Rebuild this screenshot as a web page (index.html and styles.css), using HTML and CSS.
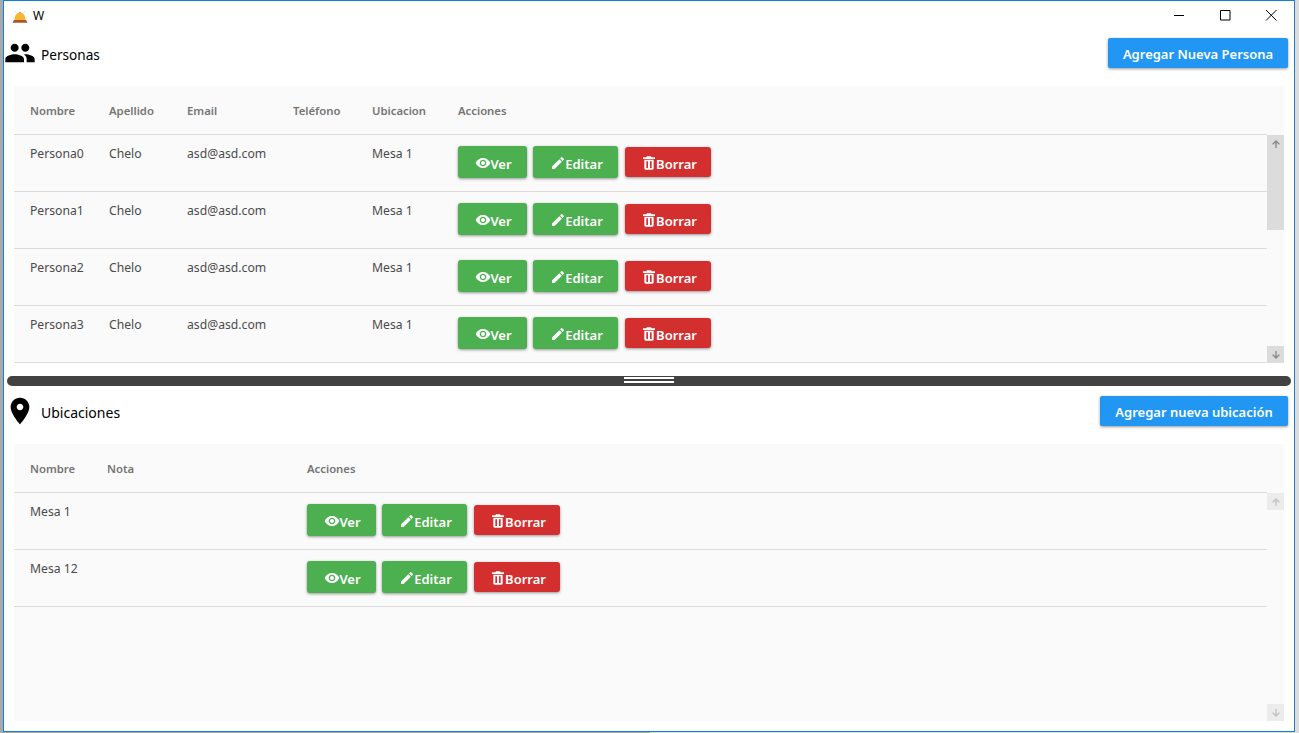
FILE: index.html
```html
<!DOCTYPE html>
<html lang="es">
<head>
<meta charset="utf-8">
<title>W</title>
<link rel="stylesheet" href="styles.css">
</head>
<body>
<svg class="defs" width="0" height="0" aria-hidden="true">
  <symbol id="i-eye" viewBox="0 0 24 24"><path d="M12 4.5C7 4.5 2.73 7.61 1 12c1.73 4.39 6 7.5 11 7.5s9.27-3.11 11-7.5c-1.73-4.39-6-7.5-11-7.5zM12 17c-2.76 0-5-2.24-5-5s2.24-5 5-5 5 2.24 5 5-2.24 5-5 5zm0-8c-1.66 0-3 1.34-3 3s1.34 3 3 3 3-1.34 3-3-1.34-3-3-3z"/></symbol>
  <symbol id="i-edit" viewBox="0 0 24 24"><path d="M3 17.25V21h3.75L17.81 9.94l-3.75-3.75L3 17.25zM20.71 7.04c.39-.39.39-1.02 0-1.41l-2.34-2.34c-.39-.39-1.02-.39-1.41 0l-1.83 1.83 3.75 3.75 1.83-1.83z"/></symbol>
  <symbol id="i-del" viewBox="0 0 24 24"><path fill-rule="evenodd" d="M5 7h14v13c0 1.100-.9 2-2 2H7c-1.100 0-2-.9-2-2V7zm3 2.500V19.500h2.500V9.500H8zm5.500 0V19.500H16V9.500h-2.500zM3 3.500h5l1-1.500h6l1 1.500h5V6H3V3.500z"/></symbol>
  <symbol id="i-up" viewBox="0 0 10 10"><path d="M5 1 9 5 7.800 5.800 5.700 3.800V9H4.300V3.800L2.200 5.800 1 5z"/></symbol>
  <symbol id="i-down" viewBox="0 0 10 10"><path d="M5 9 9 5 7.800 4.200 5.700 6.200V1H4.300V6.200L2.200 4.200 1 5z"/></symbol>
</svg>
<div class="window">
  <header class="titlebar">
    <svg class="app-icon" viewBox="0 0 16 16" aria-hidden="true">
      <path d="M2.500 12C2.500 7 5 4.800 8 4.800s5.500 2.200 5.500 7.200z" fill="#f7b733"/>
      <rect x="7.200" y="3.800" width="1.600" height="1.500" fill="#e8a020"/>
      <path d="M2 12h12l1.500 2.800H.5z" fill="#a8562a"/>
      <path d="M2.500 2.500 3.500 4M13.500 2.500l-1 1.500M8 .5v1.800" stroke="#dbe7ee" stroke-width="1"/>
    </svg>
    <span class="app-title">W</span>
    <div class="winctl">
      <svg class="ctl" viewBox="0 0 46 30" aria-hidden="true"><path d="M18 15.500h10" stroke="#000" fill="none"/></svg>
      <svg class="ctl" viewBox="0 0 46 30" aria-hidden="true"><path d="M18.500 10.500h9.500v9.500h-9.500z" stroke="#000" fill="none"/></svg>
      <svg class="ctl" viewBox="0 0 46 30" aria-hidden="true"><path d="M18 10l10.500 10.500M28.500 10 18 20.500" stroke="#000" fill="none"/></svg>
    </div>
  </header>

  <section class="pane">
    <div class="pane-head pane-head-first">
      <svg class="head-icon" viewBox="0 0 24 24" aria-hidden="true"><path d="M16 11c1.660 0 2.990-1.340 2.990-3S17.660 5 16 5c-1.660 0-3 1.340-3 3s1.340 3 3 3zm-8 0c1.660 0 2.990-1.340 2.990-3S9.660 5 8 5C6.340 5 5 6.340 5 8s1.340 3 3 3zm0 2c-2.330 0-7 1.170-7 3.500V19h14v-2.500c0-2.330-4.670-3.500-7-3.500zm8 0c-.29 0-.62.020-.97.050 1.160.84 1.970 1.970 1.970 3.450V19h6v-2.500c0-2.330-4.670-3.500-7-3.500z"/></svg>
      <h2 class="pane-title">Personas</h2>
      <button class="btn-primary btn-persona"><span>Agregar Nueva Persona</span></button>
    </div>
    <div class="card">
      <div class="grid grid-people thead">
        <span>Nombre</span><span>Apellido</span><span>Email</span><span>Teléfono</span><span>Ubicacion</span><span>Acciones</span>
      </div>
      <div class="tbody">
        <div class="rows">
          <div class="grid grid-people row">
            <span>Persona0</span><span>Chelo</span><span>asd@asd.com</span><span></span><span>Mesa 1</span>
            <div class="actions">
              <button class="btn btn-green btn-ver"><svg class="bi"><use href="#i-eye"/></svg><span>Ver</span></button>
              <button class="btn btn-green btn-edit"><svg class="bi"><use href="#i-edit"/></svg><span>Editar</span></button>
              <button class="btn btn-red"><svg class="bi"><use href="#i-del"/></svg><span>Borrar</span></button>
            </div>
          </div>
          <div class="grid grid-people row">
            <span>Persona1</span><span>Chelo</span><span>asd@asd.com</span><span></span><span>Mesa 1</span>
            <div class="actions">
              <button class="btn btn-green btn-ver"><svg class="bi"><use href="#i-eye"/></svg><span>Ver</span></button>
              <button class="btn btn-green btn-edit"><svg class="bi"><use href="#i-edit"/></svg><span>Editar</span></button>
              <button class="btn btn-red"><svg class="bi"><use href="#i-del"/></svg><span>Borrar</span></button>
            </div>
          </div>
          <div class="grid grid-people row">
            <span>Persona2</span><span>Chelo</span><span>asd@asd.com</span><span></span><span>Mesa 1</span>
            <div class="actions">
              <button class="btn btn-green btn-ver"><svg class="bi"><use href="#i-eye"/></svg><span>Ver</span></button>
              <button class="btn btn-green btn-edit"><svg class="bi"><use href="#i-edit"/></svg><span>Editar</span></button>
              <button class="btn btn-red"><svg class="bi"><use href="#i-del"/></svg><span>Borrar</span></button>
            </div>
          </div>
          <div class="grid grid-people row">
            <span>Persona3</span><span>Chelo</span><span>asd@asd.com</span><span></span><span>Mesa 1</span>
            <div class="actions">
              <button class="btn btn-green btn-ver"><svg class="bi"><use href="#i-eye"/></svg><span>Ver</span></button>
              <button class="btn btn-green btn-edit"><svg class="bi"><use href="#i-edit"/></svg><span>Editar</span></button>
              <button class="btn btn-red"><svg class="bi"><use href="#i-del"/></svg><span>Borrar</span></button>
            </div>
          </div>
        </div>
        <div class="sbar">
          <div class="sb-btn"><svg class="sb-arrow"><use href="#i-up"/></svg></div>
          <div class="sb-track"><div class="sb-thumb"></div></div>
          <div class="sb-btn"><svg class="sb-arrow"><use href="#i-down"/></svg></div>
        </div>
      </div>
    </div>
  </section>

  <div class="splitter"><div class="grip"></div></div>

  <section class="pane pane-fill">
    <div class="pane-head pane-head-second">
      <svg class="head-icon" viewBox="0 0 24 24" aria-hidden="true"><path d="M12 2C8.130 2 5 5.130 5 9c0 5.250 7 13 7 13s7-7.750 7-13c0-3.870-3.130-7-7-7zm0 9.500c-1.380 0-2.500-1.120-2.500-2.500s1.120-2.500 2.500-2.500 2.500 1.120 2.500 2.500-1.120 2.500-2.500 2.500z"/></svg>
      <h2 class="pane-title pane-title-wide">Ubicaciones</h2>
      <button class="btn-primary btn-ubic"><span>Agregar nueva ubicación</span></button>
    </div>
    <div class="card card-fill">
      <div class="grid grid-places thead">
        <span>Nombre</span><span>Nota</span><span>Acciones</span>
      </div>
      <div class="tbody tbody-fill">
        <div class="rows">
          <div class="grid grid-places row">
            <span>Mesa 1</span><span></span>
            <div class="actions">
              <button class="btn btn-green btn-ver"><svg class="bi"><use href="#i-eye"/></svg><span>Ver</span></button>
              <button class="btn btn-green btn-edit"><svg class="bi"><use href="#i-edit"/></svg><span>Editar</span></button>
              <button class="btn btn-red"><svg class="bi"><use href="#i-del"/></svg><span>Borrar</span></button>
            </div>
          </div>
          <div class="grid grid-places row">
            <span>Mesa 12</span><span></span>
            <div class="actions">
              <button class="btn btn-green btn-ver"><svg class="bi"><use href="#i-eye"/></svg><span>Ver</span></button>
              <button class="btn btn-green btn-edit"><svg class="bi"><use href="#i-edit"/></svg><span>Editar</span></button>
              <button class="btn btn-red"><svg class="bi"><use href="#i-del"/></svg><span>Borrar</span></button>
            </div>
          </div>
        </div>
        <div class="sbar sbar-off">
          <div class="sb-btn"><svg class="sb-arrow"><use href="#i-up"/></svg></div>
          <div class="sb-track"></div>
          <div class="sb-btn"><svg class="sb-arrow"><use href="#i-down"/></svg></div>
        </div>
      </div>
    </div>
  </section>
</div>
</body>
</html>
```
FILE: styles.css
```css
* { box-sizing: border-box; }
html, body { margin: 0; height: 100%; overflow: hidden; }
body {
  font-family: "Noto Sans", "Open Sans", sans-serif;
  color: #000;
  background: linear-gradient(90deg, #a9a9a9 50%, #dcdcdc 50%);
}
.defs { display: block; height: 0; }

.window {
  width: 1292px;
  height: 732px;
  margin-left: 3px;
  border: 1px solid #1181d6;
  display: flex;
  flex-direction: column;
  background: #fff;
}

.titlebar { height: 29px; display: flex; align-items: center; flex: none; padding-left: 8px; }
.app-icon { width: 16px; height: 16px; }
.app-title { font-size: 12px; margin-left: 5px; line-height: 16px; }
.winctl { margin-left: auto; display: flex; margin-top: -1px; }
.ctl { width: 46px; height: 30px; display: block; }

.pane { display: flex; flex-direction: column; flex: none; }
.pane-fill { flex: 1; min-height: 0; }
.pane-head { display: flex; align-items: center; padding: 0 6px 0 0; }
.pane-head-first { padding-top: 7px; padding-bottom: 17px; }
.pane-head-second { padding-top: 9px; padding-bottom: 17px; }
.head-icon { width: 32px; height: 32px; flex: none; fill: #000; }
.pane-title { margin: 4px 0 0 5px; font-size: 13.600px; font-weight: 400; line-height: 20px; }
.pane-title-wide { font-size: 14px; }

.btn-primary {
  margin-left: auto;
  height: 30px;
  border: 0;
  border-radius: 2px;
  background: #2196f3;
  color: #fff;
  font: 600 13px "Noto Sans", sans-serif;
  box-shadow: 0 1px 3px rgba(0,0,0,.4);
  padding: 1px 0 0;
}
.btn-persona { width: 180px; }
.btn-ubic { width: 188px; }

.card { margin: 0 10px; background: #fafafa; display: flex; flex-direction: column; }
.card-fill { height: 277px; }

.grid { display: grid; padding-left: 16px; }
.grid-people { grid-template-columns: 79px 78px 106px 79px 86px 1fr; }
.grid-places { grid-template-columns: 77px 200px 1fr; }

.thead {
  height: 49px;
  margin-right: 17px;
  align-items: center;
  border-bottom: 1px solid #dcdcdc;
  font-size: 11.300px;
  font-weight: 600;
  color: #757575;
}

.tbody { display: flex; }
.tbody-fill { flex: 1; min-height: 0; }
.rows { flex: 1; min-width: 0; }
.row {
  height: 57px;
  padding-top: 10px;
  align-content: start;
  border-bottom: 1px solid #dcdcdc;
  font-size: 12.200px;
  line-height: 18px;
  color: #4a4a4a;
}

.actions { display: flex; align-items: center; gap: 6px; margin-top: 1px; }

.btn {
  height: 32px;
  border: 0;
  border-radius: 3px;
  color: #fff;
  font: 600 13px "Noto Sans", sans-serif;
  display: flex;
  align-items: center;
  justify-content: center;
  padding: 0 0 0 2px;
  box-shadow: 0 1px 3px rgba(0,0,0,.4);
}
.btn-green { background: #4caf50; }
.btn-red { background: #d32f2f; height: 30px; width: 86px; margin-left: 1px; }
.btn-ver { width: 69px; }
.btn-edit { width: 85px; }
.bi { width: 16px; height: 16px; fill: #fff; flex: none; margin-top: 1px; }
.btn span { margin: 4px 0 0 -1px; }

.sbar { width: 17px; flex: none; display: flex; flex-direction: column; background: #fafafa; }
.sb-btn { height: 17px; flex: none; background: #dcdcdc; display: flex; align-items: center; justify-content: center; }
.sb-arrow { width: 10px; height: 10px; fill: #8a8a8a; }
.sb-track { flex: 1; }
.sb-thumb { height: 78px; background: #dcdcdc; }
.sbar-off .sb-btn { background: #ececec; }
.sbar-off .sb-arrow { fill: #c4c4c4; }

.splitter {
  height: 10px;
  margin: 13px 3px 0 3px;
  background: #424242;
  border-radius: 5px;
  flex: none;
  display: flex;
  justify-content: center;
}
.grip {
  width: 50px;
  height: 6px;
  margin-top: 1px;
  border-top: 2px solid #fff;
  border-bottom: 2px solid #fff;
}
```
